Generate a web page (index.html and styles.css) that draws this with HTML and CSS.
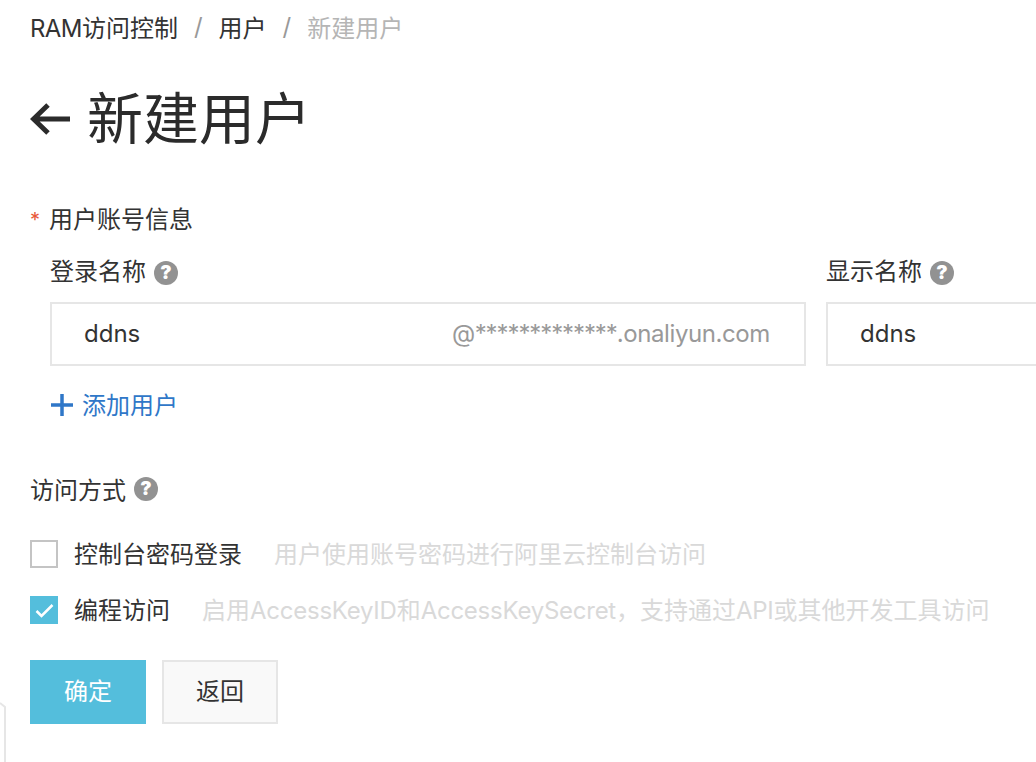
FILE: index.html
```html
<!DOCTYPE html>
<html lang="zh-CN">
<head>
<meta charset="utf-8">
<title>新建用户</title>
<link rel="stylesheet" href="styles.css">
</head>
<body>
<main class="page">
  <nav class="crumbs">
    <span><span class="tight">RAM</span>访问控制</span><span class="sep">/</span><span>用户</span><span class="sep">/</span><span class="current">新建用户</span>
  </nav>
  <header class="title-row">
    <svg class="back" width="41" height="34" viewBox="0 0 41 34"><path d="M40 17H3M18 3L3.500 17L18 31" fill="none" stroke="#2b2b2b" stroke-width="5"/></svg>
    <h1>新建用户</h1>
  </header>
  <div class="section-label"><span class="star">*</span>用户账号信息</div>
  <div class="user-grid">
    <div class="field login">
      <div class="field-label">登录名称<span class="help">?</span></div>
      <div class="input"><span>ddns</span><span class="suffix">@<span class="stars">*************</span>.onaliyun.com</span></div>
    </div>
    <div class="field display">
      <div class="field-label">显示名称<span class="help">?</span></div>
      <div class="input open"><span>ddns</span></div>
    </div>
  </div>
  <a class="add-user"><svg class="plus" width="24" height="24" viewBox="0 0 24 24"><path d="M12 1V23M1 12H23" stroke="#2f77c8" stroke-width="3.500" fill="none"/></svg>添加用户</a>
  <div class="access-label">访问方式<span class="help">?</span></div>
  <div class="check-row first">
    <span class="box"></span><span class="check-text">控制台密码登录</span><span class="hint">用户使用账号密码进行阿里云控制台访问</span>
  </div>
  <div class="check-row">
    <span class="box on"><svg width="28" height="28" viewBox="0 0 28 28"><path d="M6.500 15L11.500 20L22.500 9" fill="none" stroke="#fff" stroke-width="2.500"/></svg></span><span class="check-text">编程访问</span><span class="hint">启用<span class="latin">AccessKeyID</span>和<span class="latin">AccessKeySecret</span>，支持通过<span class="latin">API</span>或其他开发工具访问</span>
  </div>
  <div class="actions">
    <button class="btn primary">确定</button>
    <button class="btn">返回</button>
  </div>
</main>
<svg class="corner" width="8" height="62" viewBox="0 0 8 62"><path d="M0 1L5 5V62" fill="none" stroke="#e6e6e6" stroke-width="2"/></svg>
</body>
</html>
```
FILE: styles.css
```css
html, body {
  margin: 0;
  height: 100%;
  overflow: hidden;
  background: #fff;
}
body {
  font-family: "Inter", "Noto Sans CJK SC", sans-serif;
  font-size: 24px;
  color: #333;
}
.page {
  padding: 8px 0 0 30px;
}
.crumbs {
  display: flex;
  align-items: center;
  height: 36px;
  white-space: nowrap;
}
.tight {
  letter-spacing: -0.6px;
}
.sep {
  color: #999;
  margin: 0 16px;
}
.current {
  color: #b5b5b5;
}
.title-row {
  display: flex;
  align-items: center;
  gap: 16px;
  margin-top: 39px;
  height: 72px;
}
.back {
  flex: none;
}
h1 {
  margin: 0;
  font-size: 56px;
  font-weight: 400;
  line-height: 72px;
  color: #2b2b2b;
}
.section-label {
  margin-top: 48px;
  height: 36px;
  line-height: 34px;
  display: flex;
}
.star {
  color: #e8573a;
  width: 19px;
  font-size: 20px;
}
.user-grid {
  display: flex;
  gap: 20px;
  margin: 0 0 0 20px;
}
.field-label {
  height: 36px;
  line-height: 36px;
  margin-top: 15px;
  margin-bottom: 12px;
  display: flex;
  align-items: center;
}
.help {
  width: 24px;
  height: 24px;
  border-radius: 50%;
  background: #929292;
  color: #fff;
  font-size: 19px;
  font-weight: 900;
  line-height: 24px;
  text-align: center;
  margin: 2px 0 0 8px;
  flex: none;
}
.login {
  width: 756px;
}
.display {
  flex: 1;
}
.input {
  box-sizing: border-box;
  height: 64px;
  border: 2px solid #e6e6e6;
  padding: 0 34px 2px 32px;
  display: flex;
  align-items: center;
  justify-content: space-between;
}
.input.open {
  border-right: 0;
}
.suffix {
  color: #999;
  letter-spacing: -0.4px;
}
.stars {
  letter-spacing: -1.1px;
}
.add-user {
  display: flex;
  align-items: center;
  gap: 8px;
  margin: 19px 0 0 20px;
  height: 36px;
  color: #2f77c8;
}
.plus {
  margin-top: 3px;
}
.access-label {
  display: flex;
  align-items: center;
  height: 36px;
  margin-top: 49px;
}
.check-row {
  display: flex;
  align-items: center;
  height: 28px;
  margin-top: 28px;
}
.check-row.first {
  margin-top: 34px;
}
.box {
  box-sizing: border-box;
  width: 28px;
  height: 28px;
  border: 2px solid #c4c4c4;
  flex: none;
}
.box.on {
  border: 0;
  background: #54bedc;
}
.box svg {
  display: block;
}
.check-text {
  margin-left: 16px;
  padding-bottom: 4px;
}
.hint {
  margin-left: 32px;
  padding-bottom: 4px;
  color: #d9d9d9;
  white-space: nowrap;
}
.latin {
  letter-spacing: -0.25px;
}
.actions {
  display: flex;
  gap: 16px;
  margin-top: 36px;
}
.btn {
  box-sizing: border-box;
  width: 116px;
  height: 64px;
  border: 2px solid #e6e6e6;
  background: #f9f9f9;
  color: #333;
  font: inherit;
  padding: 0 0 5px;
}
.btn.primary {
  border: 0;
  background: #54bedc;
  color: #fff;
}
.corner {
  position: absolute;
  left: 0;
  top: 702px;
}
```
